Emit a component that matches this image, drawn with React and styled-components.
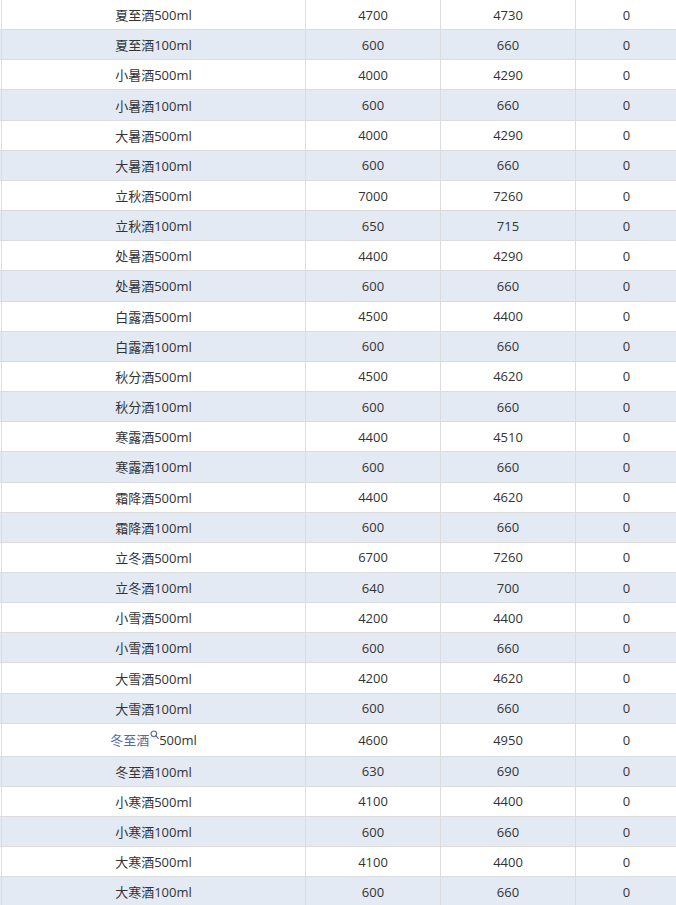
import React from "react";
import styled, { createGlobalStyle } from "styled-components";

const Global = createGlobalStyle`
  html, body {
    margin: 0;
    padding: 0;
    background: #ffffff;
    overflow: hidden;
  }
  body {
    font-family: "Open Sans", "Noto Sans CJK SC", sans-serif;
  }
`;

const Table = styled.div`
  display: flex;
  flex-direction: column;
  margin-top: 0;
  width: 677px;
`;

const Row = styled.div`
  display: grid;
  grid-template-columns: 305px 135px 135px 102px;
  box-sizing: border-box;
  height: ${(p) => (p.$tall ? "33px" : "30.17px")};
  border-bottom: 1px solid #dcdcdc;
  background: ${(p) => (p.$alt ? "#e4eaf4" : "#ffffff")};
`;

const Cell = styled.div`
  display: flex;
  align-items: center;
  justify-content: center;
  box-sizing: border-box;
  border-left: 1px solid #dcdcdc;
  margin-left: ${(p) => (p.$first ? "1px" : "0")};
  font-size: 13px;
  color: #333333;
  white-space: nowrap;
`;

const Keyword = styled.span`
  color: #5b6a9e;
`;

const SearchMark = styled.svg`
  width: 9px;
  height: 10px;
  margin: 0 0 0 1px;
  align-self: flex-start;
  margin-top: 6px;
`;

const rows = [
  ["夏至酒500ml", 4700, 4730],
  ["夏至酒100ml", 600, 660],
  ["小暑酒500ml", 4000, 4290],
  ["小暑酒100ml", 600, 660],
  ["大暑酒500ml", 4000, 4290],
  ["大暑酒100ml", 600, 660],
  ["立秋酒500ml", 7000, 7260],
  ["立秋酒100ml", 650, 715],
  ["处暑酒500ml", 4400, 4290],
  ["处暑酒500ml", 600, 660],
  ["白露酒500ml", 4500, 4400],
  ["白露酒100ml", 600, 660],
  ["秋分酒500ml", 4500, 4620],
  ["秋分酒100ml", 600, 660],
  ["寒露酒500ml", 4400, 4510],
  ["寒露酒100ml", 600, 660],
  ["霜降酒500ml", 4400, 4620],
  ["霜降酒100ml", 600, 660],
  ["立冬酒500ml", 6700, 7260],
  ["立冬酒100ml", 640, 700],
  ["小雪酒500ml", 4200, 4400],
  ["小雪酒100ml", 600, 660],
  ["大雪酒500ml", 4200, 4620],
  ["大雪酒100ml", 600, 660],
  ["SEARCH", 4600, 4950],
  ["冬至酒100ml", 630, 690],
  ["小寒酒500ml", 4100, 4400],
  ["小寒酒100ml", 600, 660],
  ["大寒酒500ml", 4100, 4400],
  ["大寒酒100ml", 600, 660],
];

function NameCell({ name }) {
  if (name !== "SEARCH") return <Cell $first>{name}</Cell>;
  return (
    <Cell $first>
      <Keyword>冬至酒</Keyword>
      <SearchMark viewBox="0 0 9 10">
        <circle cx="3.8" cy="3.8" r="2.8" fill="none" stroke="#5b6a9e" strokeWidth="1.2" />
        <line x1="5.9" y1="5.9" x2="8.2" y2="8.4" stroke="#5b6a9e" strokeWidth="1.3" strokeLinecap="round" />
      </SearchMark>
      500ml
    </Cell>
  );
}

export default function App() {
  return (
    <>
      <Global />
      <Table>
        {rows.map(([name, a, b], i) => (
          <Row key={i} $alt={i % 2 === 1} $tall={name === "SEARCH"}>
            <NameCell name={name} />
            <Cell>{a}</Cell>
            <Cell>{b}</Cell>
            <Cell>0</Cell>
          </Row>
        ))}
      </Table>
    </>
  );
}
